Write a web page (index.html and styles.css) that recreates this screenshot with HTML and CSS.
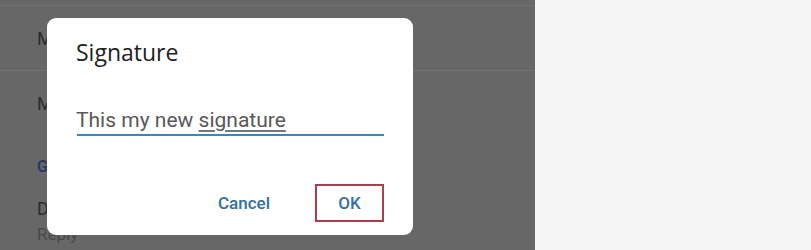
FILE: index.html
```html
<!DOCTYPE HTML>
<html lang="en">
<head>
<meta charset="utf-8"/>
<title>Signature</title>
<link rel="stylesheet" href="styles.css">
</head>
<body>
<div class="page">
  <div class="screen">
    <div class="row row-top"></div>
    <div class="row row-first"><span class="item">Mobile signature</span></div>
    <div class="row row-second"><span class="item">My signature</span></div>
    <div class="row row-head"><span class="item head">General</span></div>
    <div class="row row-last">
      <span class="item">Default reply action</span>
      <span class="sub">Reply</span>
    </div>

    <div class="dialog">
      <h2 class="dialog-title">Signature</h2>
      <div class="field">
        <span class="field-text">This my new <u class="spell">signature</u></span>
      </div>
      <div class="actions">
        <button class="action">Cancel</button>
        <button class="action action-ok">OK</button>
      </div>
    </div>
  </div>
  <div class="side"></div>
</div>
</body>
</html>
```

FILE: styles.css
```css
html, body { margin: 0; padding: 0; }

body { font-family: Roboto, "Noto Sans", sans-serif; }

.page { display: flex; width: 811px; height: 250px; overflow: hidden; }

.screen {
  position: relative;
  width: 535px;
  height: 250px;
  background: #676767;
  overflow: hidden;
}

.side { flex: 1; background: #f5f5f5; }

.row { padding-left: 37px; box-sizing: border-box; }

.row-top { height: 6px; border-bottom: 1px solid #727272; }

.row-first {
  height: 65px;
  border-bottom: 1px solid #727272;
  display: flex;
  align-items: center;
}

.row-second { height: 64px; display: flex; align-items: center; }

.row-head { height: 62px; display: flex; align-items: center; }

.row-last { padding-top: 1px; display: flex; flex-direction: column; }

.item { font-size: 18px; line-height: 21px; color: #2c2c2c; white-space: nowrap; }

.head { font-size: 16px; font-weight: 500; color: #1d3764; }

.sub { font-size: 17px; line-height: 21px; color: #4a4a4a; margin-top: 5px; }

/* modal sitting over the settings list */
.dialog {
  position: absolute;
  left: 47px;
  top: 18px;
  width: 366px;
  height: 217px;
  box-sizing: border-box;
  padding: 19px 29px 0 30px;
  background: #ffffff;
  border-radius: 9px;
  display: flex;
  flex-direction: column;
}

.dialog-title {
  margin: 0;
  font-family: "Open Sans", Roboto, sans-serif;
  font-weight: 400;
  font-size: 23px;
  line-height: 30px;
  color: #222222;
  margin-left: -1px;
}

.field {
  margin-top: 39px;
  font-size: 21px;
  line-height: 28px;
  border-bottom: 2px solid #3d86bd;
}

.field-text { color: #585858; margin-left: -1px; }

.spell { text-decoration-color: #777777; text-underline-offset: 3px; }

.actions {
  margin-top: 48px;
  display: flex;
  justify-content: flex-end;
  gap: 27px;
}

.action {
  font-family: Roboto, sans-serif;
  font-weight: 500;
  font-size: 17px;
  color: #33709f;
  background: none;
  border: 2px solid transparent;
  height: 38px;
  padding: 0 16px;
}

.action-ok { border-color: #b23b4c; width: 69px; }
```
